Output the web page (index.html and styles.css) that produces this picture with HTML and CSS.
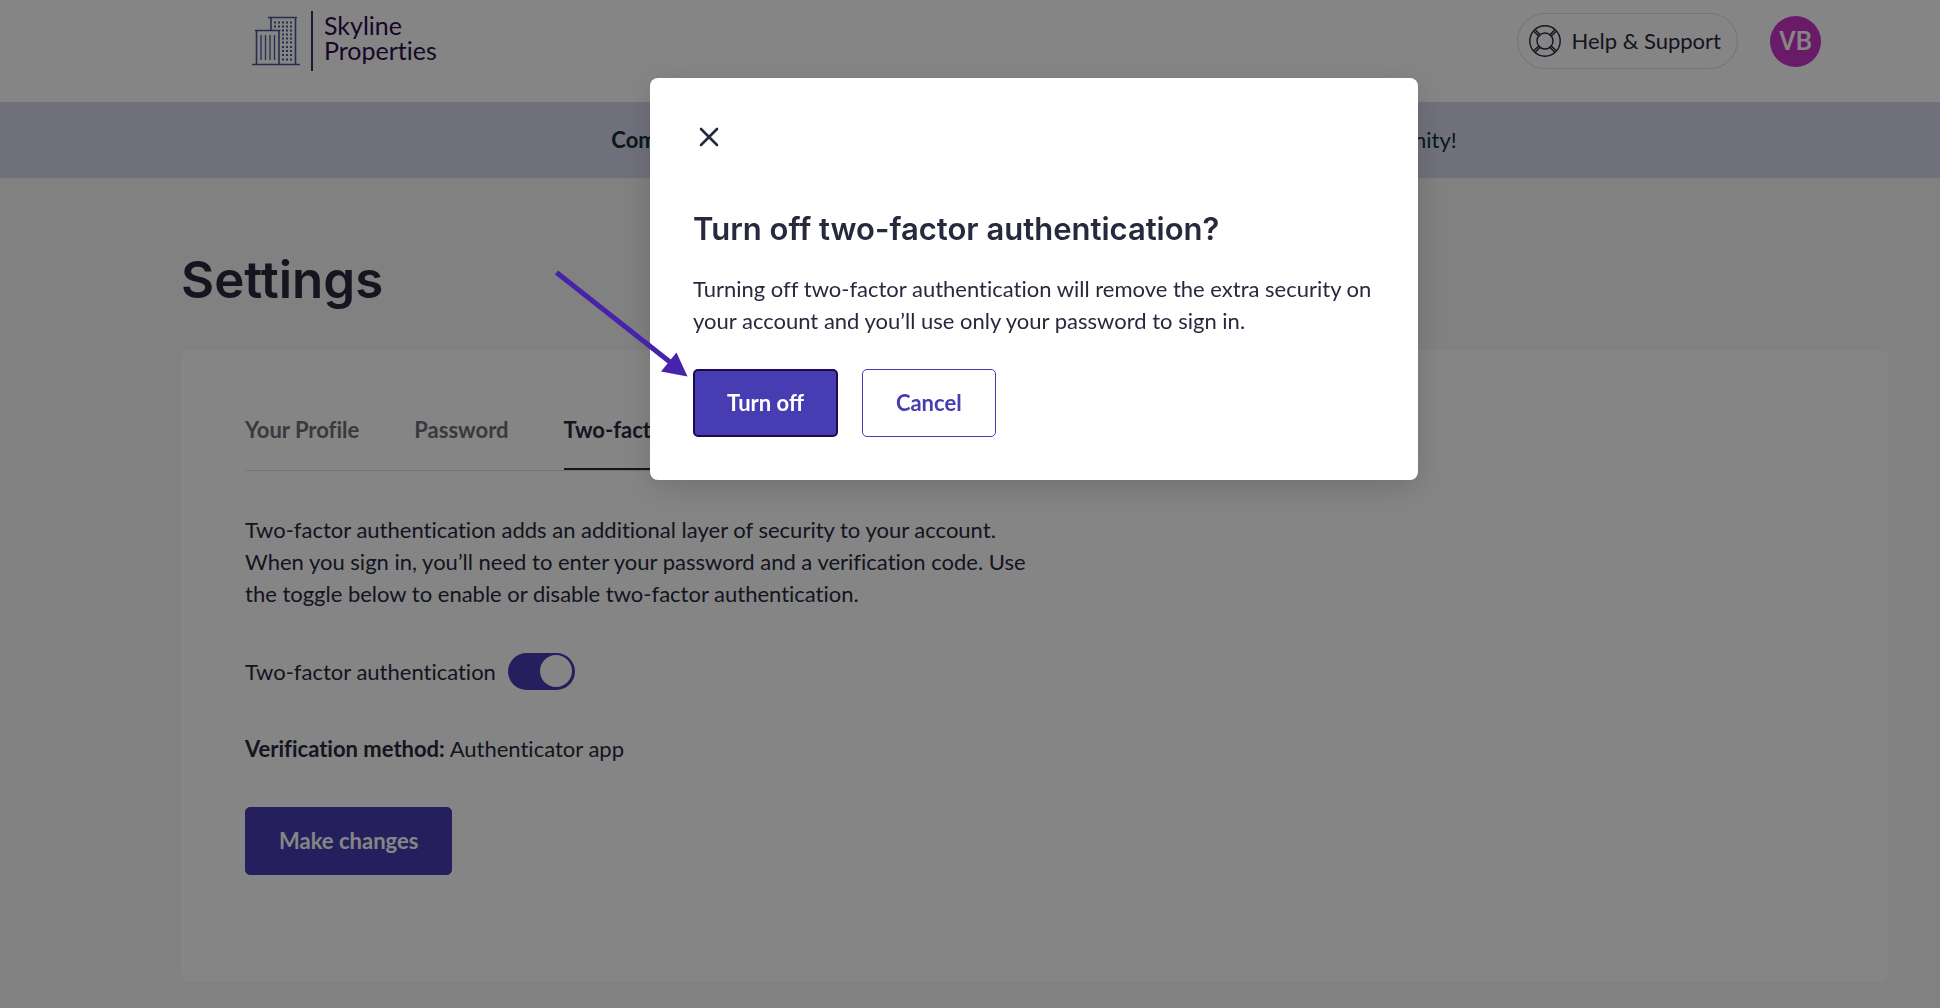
FILE: index.html
```html
<!DOCTYPE html>
<html lang="en">
<head>
    <meta charset="UTF-8">
    <meta name="viewport" content="width=device-width, initial-scale=1.0">
    <title>Settings - Skyline Properties</title>
    <link rel="stylesheet" href="styles.css">
</head>
<body>
    <header class="header">
        <a class="logo" href="#">
            <svg class="logo-icon" width="48" height="50" viewBox="0 0 48 50" fill="none" stroke="#48569c" stroke-width="1.6">
                <path d="M0 48.5h48M4.5 48V15M27 48V15M3 14.500h25.500M19 14V2M43.500 48V1M16 1.500h29"/>
                <path d="M9 19v25M13.500 19v25M18 19v25M22.500 19v25" stroke-width="1.3"/>
                <path d="M22 6.500h20M22 10.500h20" stroke-width="2" stroke-dasharray="2 2"/>
                <path d="M30 14.500h12M30 18.500h12M30 22.500h12M30 26.500h12M30 31h12M30 35h12M30 39h12M30 43.500h12" stroke-width="2" stroke-dasharray="2 2"/>
            </svg>
            <span class="logo-text">Skyline<br>Properties</span>
        </a>
        <div class="header-actions">
            <a class="help" href="#">
                <svg width="32" height="32" viewBox="0 0 32 32" fill="none" stroke="currentColor" stroke-width="1.4">
                    <circle cx="16" cy="16" r="15.200"/>
                    <circle cx="16" cy="16" r="8"/>
                    <path d="M5 6.500l5.200 5M6.500 5l5 5.200M27 6.500l-5.200 5M25.500 5l-5 5.200M5 25.500l5.200-5M6.500 27l5-5.200M27 25.500l-5.200-5M25.500 27l-5-5.200"/>
                </svg>
                Help &amp; Support
            </a>
            <button class="avatar" type="button">VB</button>
        </div>
    </header>

    <div class="banner">
        <p><strong>Coming soon:</strong> We will be launching more ways for you to connect with your community!</p>
    </div>

    <main class="main">
        <h1>Settings</h1>
        <section class="card">
            <nav class="tabs">
                <a class="tab" href="#">Your Profile</a>
                <a class="tab" href="#">Password</a>
                <a class="tab active" href="#">Two-factor authentication</a>
            </nav>
            <p class="intro">Two-factor authentication adds an additional layer of security to your account. When you sign in, you’ll need to enter your password and a verification code. Use the toggle below to enable or disable two-factor authentication.</p>
            <div class="toggle-row">
                <label for="two-factor">Two-factor authentication</label>
                <input class="toggle" type="checkbox" role="switch" id="two-factor" checked>
            </div>
            <p class="method"><strong>Verification method:</strong> Authenticator app</p>
            <button class="btn" type="button">Make changes</button>
        </section>
    </main>

    <div class="overlay">
        <div class="modal" role="dialog" aria-modal="true" aria-labelledby="modal-title">
            <button class="close" type="button" aria-label="Close">
                <svg width="20" height="20" viewBox="0 0 20 20" fill="none" stroke="currentColor" stroke-width="2.6" stroke-linecap="round">
                    <path d="M2 2l16 16M18 2L2 18"/>
                </svg>
            </button>
            <h2 id="modal-title">Turn off two-factor authentication?</h2>
            <p>Turning off two-factor authentication will remove the extra security on your account and you’ll use only your password to sign in.</p>
            <div class="modal-actions">
                <button class="btn focused" type="button">Turn off</button>
                <button class="btn outline" type="button">Cancel</button>
            </div>
            <svg class="arrow" width="136" height="108" viewBox="0 0 136 108" aria-hidden="true">
                <path d="M2.500 2.500L116 92" stroke="#4722aa" stroke-width="5"/>
                <path d="M133.500 106.500L122.500 82.500L107 101.500z" fill="#4722aa"/>
            </svg>
        </div>
    </div>
</body>
</html>
```
FILE: styles.css
```css
* {
    box-sizing: border-box;
}

body {
    margin: 0;
    min-height: 100vh;
    background-color: #f7f7f7;
    color: #27293d;
    font-family: Lato, sans-serif;
    font-size: 22px;
    font-variant-ligatures: none;
    line-height: 32px;
}

h1,
h2,
p {
    margin: 0;
}

a {
    color: inherit;
    text-decoration: none;
}

.header {
    display: flex;
    justify-content: space-between;
    align-items: center;
    padding: 11px 119px 31px 252px;
    background-color: #fff;
}

.logo {
    display: flex;
    align-items: center;
}

.logo-text {
    margin-left: 11px;
    padding: 2px 0 8px 11px;
    border-left: 2px solid #4a2a5c;
    color: #2b0f4d;
    font-size: 25px;
    line-height: 25px;
}

.header-actions {
    display: flex;
    align-items: center;
    gap: 32px;
}

.help {
    display: flex;
    align-items: center;
    gap: 10px;
    padding: 11px 16px 11px 11px;
    border: 1px solid #dcdce0;
    border-radius: 28px;
}

.avatar {
    width: 51px;
    height: 51px;
    padding: 0;
    border: none;
    border-radius: 50%;
    background-color: #ca35c5;
    color: #fff;
    font-family: Roboto, sans-serif;
    font-size: 26px;
    font-weight: 500;
}

.banner {
    padding: 22px 24px 22px 152px;
    background-color: #d8d7f0;
    color: #10302f;
    text-align: center;
}

.main {
    padding: 70px 52px 24px 181px;
}

h1 {
    margin-bottom: 38px;
    font-family: Inter, sans-serif;
    font-size: 51px;
    font-weight: 600;
    line-height: 64px;
}

.card {
    padding: 64px 64px 107px;
    border-radius: 8px;
    background-color: #fff;
}

.tabs {
    display: flex;
    gap: 55px;
    max-width: 776px;
    margin-bottom: 43px;
    border-bottom: 1px solid #dcdce0;
}

.tab {
    padding-bottom: 22px;
    border-bottom: 2px solid transparent;
    color: #6e6f78;
    font-weight: 700;
}

.tab.active {
    border-color: #27293d;
    color: #27293d;
}

.intro {
    max-width: 792px;
}

.toggle-row {
    display: flex;
    align-items: center;
    gap: 12px;
    margin: 43px 0;
}

.toggle {
    appearance: none;
    width: 67px;
    height: 37px;
    margin: 0;
    padding: 2px 3px;
    border-radius: 19px;
    background-color: #473db2;
}

.toggle::before {
    content: "";
    display: block;
    width: 32px;
    height: 32px;
    border-radius: 50%;
    background-color: #fff;
}

.toggle:checked::before {
    margin-left: auto;
}

.method {
    margin-bottom: 42px;
}

.btn {
    padding: 17px 33px;
    border: 1px solid #473db2;
    border-radius: 5px;
    background-color: #473db2;
    color: #fff;
    font-family: inherit;
    font-size: 22px;
    font-weight: 700;
    line-height: 32px;
}

.btn.focused {
    padding: 16px 32px;
    border: 2px solid #1f0a4f;
}

.btn.outline {
    background-color: #fff;
    color: #473db2;
}

.overlay {
    position: fixed;
    inset: 0;
    display: flex;
    justify-content: center;
    align-items: flex-start;
    padding: 78px 0 0 128px;
    background-color: rgba(0, 0, 0, 0.48);
}

.modal {
    position: relative;
    width: 100%;
    max-width: 768px;
    padding: 43px;
    border-radius: 8px;
    background-color: #fff;
    box-shadow: 0 8px 32px rgba(0, 0, 0, 0.16);
}

.close {
    display: flex;
    justify-content: center;
    align-items: center;
    width: 32px;
    height: 32px;
    margin-bottom: 56px;
    padding: 0;
    border: none;
    background: none;
    color: #27293d;
}

h2 {
    margin-bottom: 24px;
    font-family: Inter, sans-serif;
    font-size: 31px;
    font-weight: 600;
    line-height: 40px;
}

.modal-actions {
    display: flex;
    gap: 24px;
    margin-top: 32px;
}

.arrow {
    position: absolute;
    top: 192px;
    left: -96px;
}
```
